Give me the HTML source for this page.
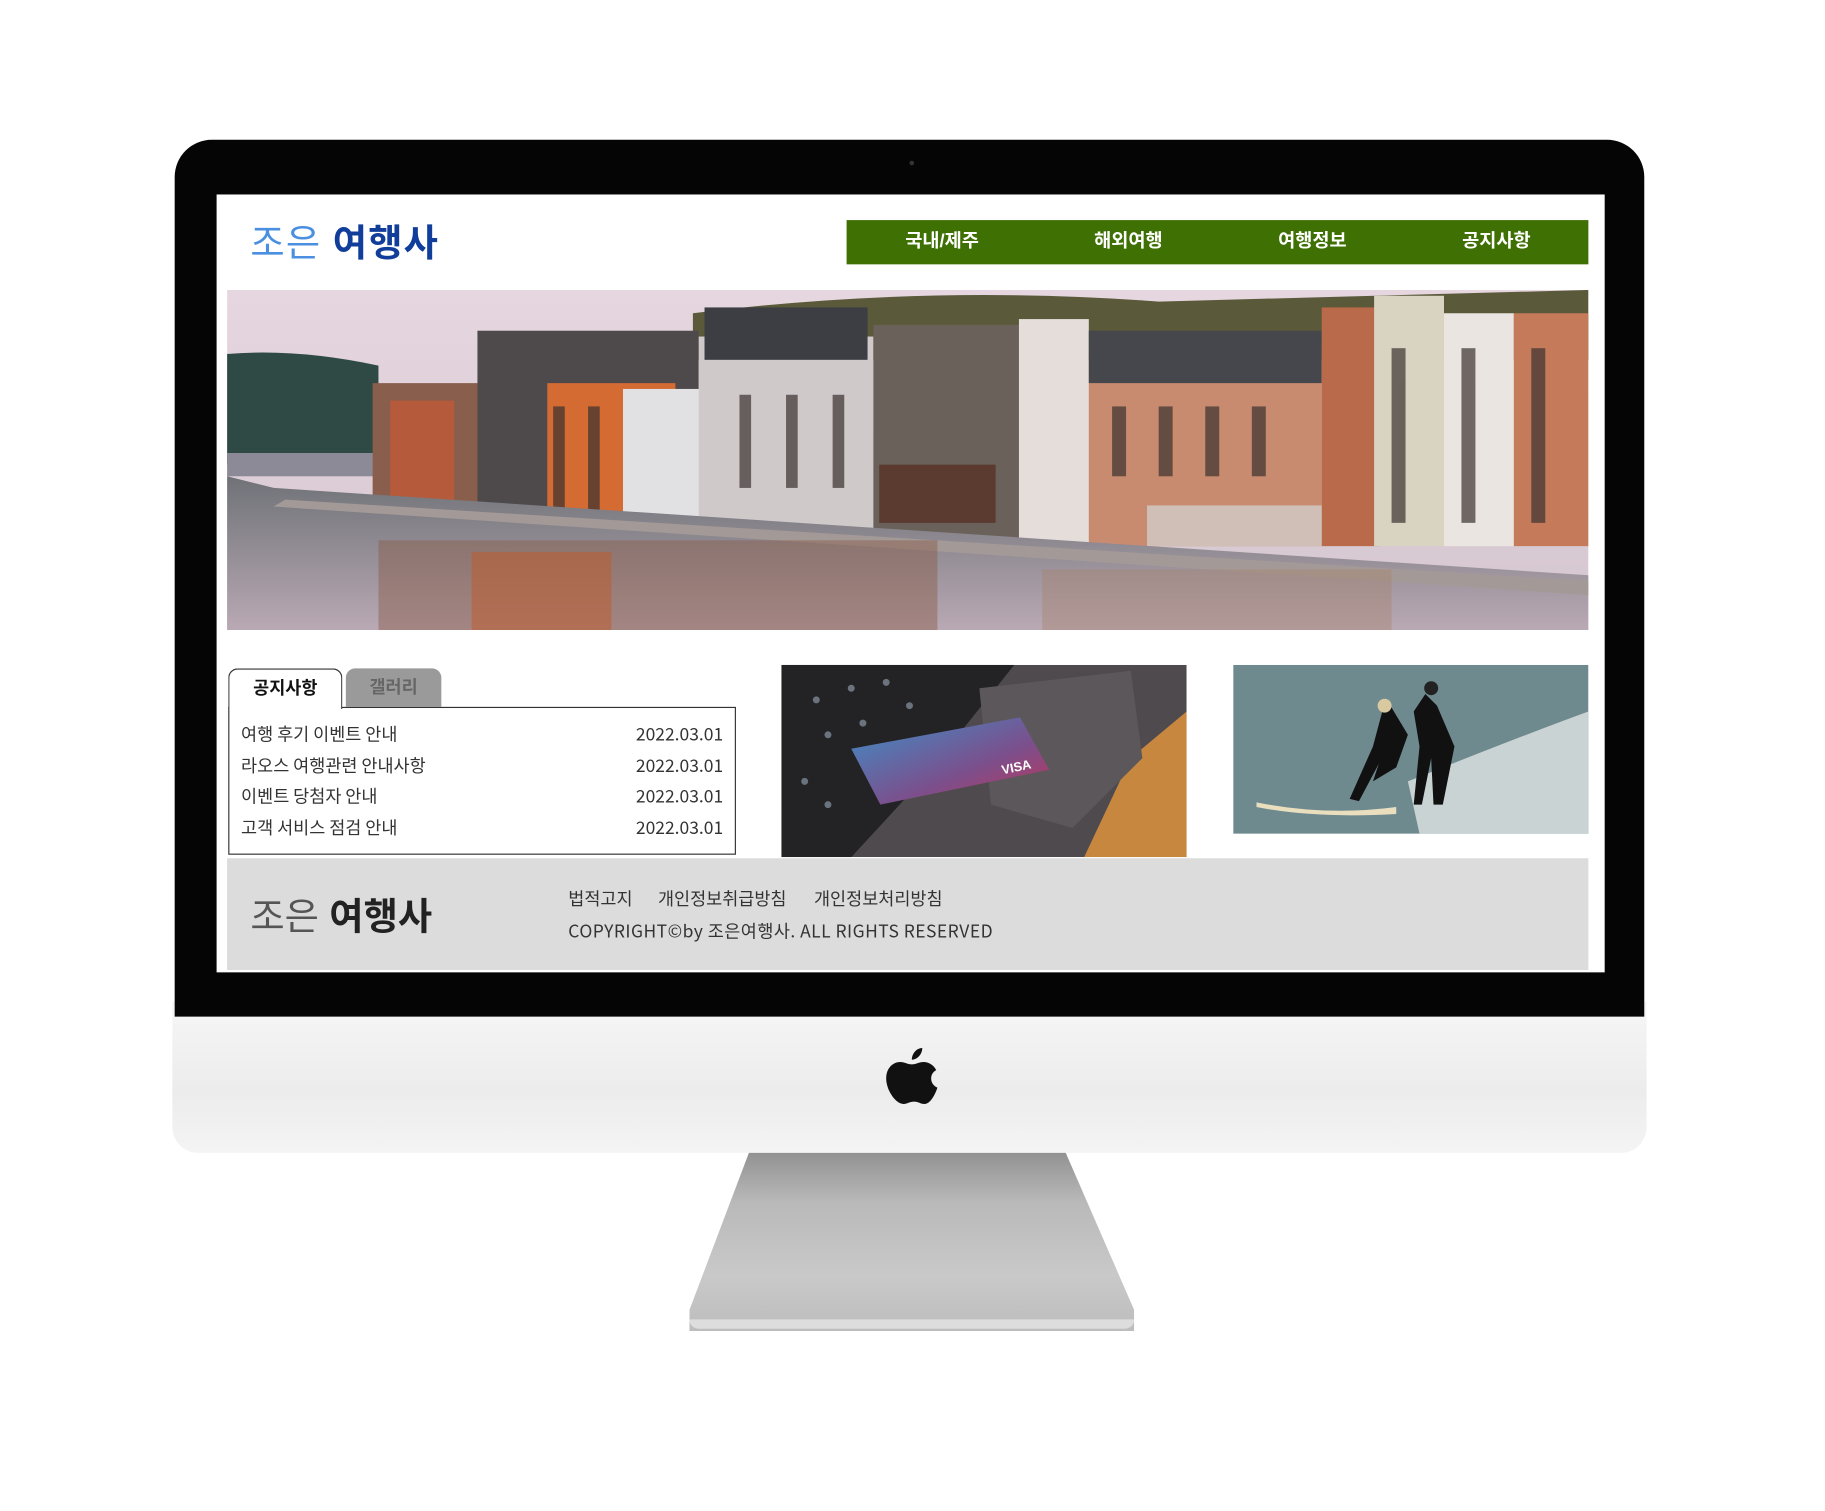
<!DOCTYPE html>
<html><head><meta charset="utf-8"><style>
html,body{margin:0;padding:0;width:1825px;height:1511px;overflow:hidden;background:#fff}
#w{position:absolute;left:0;top:0;width:1560px;height:1292px;transform:scale(1.1645);transform-origin:0 0;font-family:"Liberation Sans","Noto Sans CJK KR",sans-serif}
.a{position:absolute}
.nav span{position:absolute;top:0;line-height:38px;color:#fff;font-weight:bold;font-size:16px;transform:translateX(-50%)}
.row{position:absolute;left:10px;right:10px;font-size:15px;color:#333;height:26px;line-height:26px;font-family:"Noto Sans CJK KR",sans-serif}
.row b{font-weight:normal;float:right}
.nk{font-family:"Noto Sans CJK KR",sans-serif}
</style></head><body><div id="w">
<div class="a" style="left:592px;top:985px;width:382px;height:158px;background:linear-gradient(#8d8d8d,#b9b9b9 30%,#c9c9c9 70%,#bdbdbd);clip-path:polygon(53px 0,321px 0,382px 140px,382px 158px,0 158px,0 140px)"></div>
<div class="a" style="left:592px;top:1133px;width:382px;height:8px;background:#ddd;border-radius:0 0 8px 8px"></div>
<div class="a" style="left:148px;top:860px;width:1266px;height:130px;background:linear-gradient(#f6f6f6,#ececec 60%,#f4f4f4);border-radius:0 0 22px 22px"></div>
<svg class="a" style="left:759px;top:896px" width="48" height="60" viewBox="0 0 48 60"><path d="M33 4c0 5-4 10-9 10 0-5 4-10 9-10z" fill="#111"/><path d="M24 18c4 0 6-2 10-2 5 0 9 3 11 7-6 3-6 12 1 15-2 6-6 14-11 14-4 0-5-2-9-2s-6 2-9 2C10 52 2 40 2 30c0-9 6-14 12-14 4 0 6 2 10 2z" fill="#111"/></svg>
<div class="a" style="left:150px;top:120px;width:1262px;height:753px;background:#050505;border-radius:32px 32px 0 0"></div>
<div class="a" style="left:781px;top:138px;width:4px;height:4px;border-radius:2px;background:#333"></div>
<div class="a" style="left:186px;top:167px;width:1192px;height:668px;background:#fff"></div>
<div class="a" style="left:215px;top:184px;font-size:32px;font-weight:bold;letter-spacing:1px"><span style="color:#4a8fe0;font-weight:normal">조은</span> <span style="color:#123e9b">여행사</span></div>
<div class="a nav" style="left:727px;top:189px;width:637px;height:38px;background:#3e7003">
<span style="left:82px">국내/제주</span><span style="left:242px">해외여행</span><span style="left:400px">여행정보</span><span style="left:558px">공지사항</span></div>
<svg class="a" style="left:195px;top:249px" width="1169" height="292" viewBox="0 0 1169 292" preserveAspectRatio="none">
<defs><linearGradient id="sk" x1="0" y1="0" x2="0" y2="1"><stop offset="0" stop-color="#e6d6e0"/><stop offset="1" stop-color="#d4c6cf"/></linearGradient>
<linearGradient id="wa" x1="0" y1="0" x2="0" y2="1"><stop offset="0" stop-color="#6f7278"/><stop offset="1" stop-color="#b9a9b4"/></linearGradient></defs>
<rect width="1169" height="292" fill="url(#sk)"/>
<path d="M0 55 Q60 50 130 65 L130 150 L0 150z" fill="#2f4a45"/>
<path d="M400 20 Q600 -5 800 10 L1169 0 L1169 60 L400 60z" fill="#5a5a3a"/>
<rect x="0" y="140" width="130" height="20" fill="#8c8a96"/>
<rect x="125" y="80" width="95" height="140" fill="#8a5e4c"/>
<rect x="140" y="95" width="55" height="120" fill="#b55a3a"/>
<rect x="215" y="35" width="190" height="185" fill="#4e4a4c"/>
<rect x="275" y="80" width="110" height="140" fill="#d46b32"/>
<rect x="340" y="85" width="70" height="135" fill="#e1e1e3"/>
<rect x="405" y="40" width="150" height="180" fill="#cfc9c9"/>
<rect x="410" y="15" width="140" height="45" fill="#3c3e44"/>
<rect x="555" y="30" width="130" height="190" fill="#6a625a"/>
<rect x="560" y="150" width="100" height="50" fill="#5b3a30"/>
<rect x="680" y="25" width="60" height="195" fill="#e4ddd9"/>
<rect x="740" y="50" width="200" height="170" fill="#c98b6f"/>
<rect x="740" y="35" width="200" height="45" fill="#46474d"/>
<rect x="940" y="15" width="50" height="205" fill="#b86a4a"/>
<rect x="985" y="5" width="60" height="215" fill="#d9d4c2"/>
<rect x="1045" y="20" width="60" height="200" fill="#ebe5e1"/>
<rect x="1105" y="20" width="64" height="200" fill="#c57b5a"/>
<rect x="790" y="185" width="150" height="35" fill="#cfbfb6"/>
<g fill="#3b3230" opacity=".7">
<rect x="280" y="100" width="10" height="90"/><rect x="310" y="100" width="10" height="90"/><rect x="440" y="90" width="10" height="80"/><rect x="480" y="90" width="10" height="80"/><rect x="520" y="90" width="10" height="80"/><rect x="760" y="100" width="12" height="60"/><rect x="800" y="100" width="12" height="60"/><rect x="840" y="100" width="12" height="60"/><rect x="880" y="100" width="12" height="60"/><rect x="1000" y="50" width="12" height="150"/><rect x="1060" y="50" width="12" height="150"/><rect x="1120" y="50" width="12" height="150"/></g>
<path d="M40 170 L1169 245 L1169 292 L0 292 L0 160z" fill="url(#wa)"/>
<path d="M50 180 L1169 250 L1169 262 L40 186z" fill="#a39a97"/>
<rect x="130" y="215" width="480" height="77" fill="#8a5a48" opacity=".45"/>
<rect x="210" y="225" width="120" height="67" fill="#c05a2a" opacity=".5"/>
<rect x="700" y="240" width="300" height="52" fill="#a8826e" opacity=".4"/>
</svg>
<div class="a" style="left:196px;top:574px;width:96px;height:34px;border:1px solid #333;border-bottom:none;border-radius:8px 8px 0 0;background:#fff;z-index:2;text-align:center;line-height:34px;font-size:15px;font-weight:bold;color:#111">공지사항</div>
<div class="a" style="left:297px;top:574px;width:82px;height:33px;border-radius:8px 8px 0 0;background:#9a9a9a;text-align:center;line-height:34px;font-size:15px;font-weight:bold;color:#666">갤러리</div>
<div class="a" style="left:196px;top:607px;width:434px;height:125px;border:1px solid #333;background:#fff">
<div class="row" style="top:10px">여행 후기 이벤트 안내<b>2022.03.01</b></div>
<div class="row" style="top:37px">라오스 여행관련 안내사항<b>2022.03.01</b></div>
<div class="row" style="top:63px">이벤트 당첨자 안내<b>2022.03.01</b></div>
<div class="row" style="top:90px">고객 서비스 점검 안내<b>2022.03.01</b></div>
</div>
<svg class="a" style="left:671px;top:571px" width="348" height="165" viewBox="0 0 348 165">
<rect width="348" height="165" fill="#4e4a4d"/>
<path d="M300 80 L348 40 L348 165 L260 165z" fill="#c8873f"/>
<path d="M0 0 L200 0 L120 100 L60 165 L0 165z" fill="#232224"/>
<path d="M170 20 L300 5 L310 80 L250 140 L180 120z" fill="#5c575b"/>
<g fill="#9ab" opacity=".6"><circle cx="30" cy="30" r="3"/><circle cx="60" cy="20" r="3"/><circle cx="90" cy="15" r="3"/><circle cx="40" cy="60" r="3"/><circle cx="70" cy="50" r="3"/><circle cx="110" cy="35" r="3"/><circle cx="20" cy="100" r="3"/><circle cx="40" cy="120" r="3"/></g>
<defs><linearGradient id="cd" x1="0" y1="0" x2="1" y2="1"><stop offset="0" stop-color="#3d8fc8"/><stop offset=".6" stop-color="#7b4f8c"/><stop offset="1" stop-color="#c03457"/></linearGradient></defs>
<path d="M60 72 L205 45 L230 90 L85 120z" fill="url(#cd)"/>
<text x="190" y="94" font-family="Liberation Sans" font-weight="bold" font-size="11" fill="#fff" transform="rotate(-12 190 94)">VISA</text>
</svg>
<svg class="a" style="left:1059px;top:571px" width="305" height="145" viewBox="0 0 305 145">
<rect width="305" height="145" fill="#6f8a8f"/>
<path d="M150 100 Q250 60 305 40 L305 145 L160 145z" fill="#c9d3d4"/>
<path d="M20 118 Q80 130 140 122 L140 128 Q70 132 20 122z" fill="#e9dfbf"/>
<path d="M120 100 L140 88 L150 60 L135 35 L128 40 L120 70 L100 115 L108 117 L125 85z" fill="#111"/>
<path d="M155 120 L160 70 L155 40 L165 25 L175 35 L190 70 L180 120 L172 120 L170 80 L162 120z" fill="#111"/>
<circle cx="170" cy="20" r="6" fill="#222"/><circle cx="130" cy="35" r="6" fill="#d9c9a0"/>
</svg>
<div class="a" style="left:195px;top:737px;width:1169px;height:96px;background:#dcdcdc"></div>
<div class="a" style="left:215px;top:762px;font-size:32px;font-weight:bold;color:#222"><span style="color:#555;font-weight:normal">조은</span> 여행사</div>
<div class="a nk" style="left:488px;top:761px;font-size:15px;color:#333"><span>법적고지</span><span style="position:absolute;left:77px;white-space:nowrap">개인정보취급방침</span><span style="position:absolute;left:211px;white-space:nowrap">개인정보처리방침</span></div>
<div class="a nk" style="left:488px;top:789px;font-size:15px;color:#333;letter-spacing:0.4px;white-space:nowrap">COPYRIGHT©by 조은여행사. ALL RIGHTS RESERVED</div>
</div></body></html>
